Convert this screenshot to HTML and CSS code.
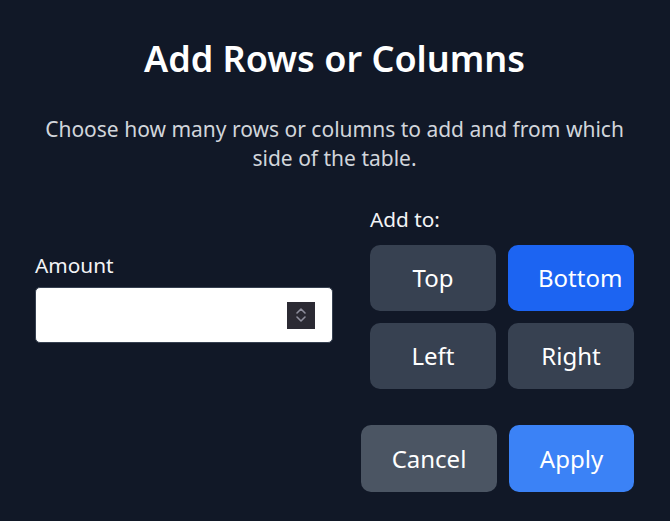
FILE: index.html
```html
<!DOCTYPE html>
<html lang="en">
<head>
<meta charset="utf-8">
<title>Add Rows or Columns</title>
<link rel="stylesheet" href="styles.css">
</head>
<body>
<div class="dialog">
  <h1 class="title">Add Rows or Columns</h1>
  <p class="subtitle">Choose how many rows or columns to add and from which side of the table.</p>
  <div class="main">
    <div class="amount">
      <label class="label">Amount</label>
      <div class="input">
        <span class="spinner">
          <svg width="12" height="20" viewBox="0 0 12 20" fill="none" stroke="#8f8f9d" stroke-width="1.6" stroke-linecap="round" stroke-linejoin="round">
            <path d="M2 8 L6 4 L10 8"/>
            <path d="M2 12 L6 16 L10 12"/>
          </svg>
        </span>
      </div>
    </div>
    <div class="sides">
      <div class="label">Add to:</div>
      <div class="side-grid">
        <button class="btn side">Top</button>
        <button class="btn side active">Bottom</button>
        <button class="btn side">Left</button>
        <button class="btn side">Right</button>
      </div>
    </div>
  </div>
  <div class="footer">
    <button class="btn cancel">Cancel</button>
    <button class="btn apply">Apply</button>
  </div>
</div>
</body>
</html>
```

FILE: styles.css
```css
html, body {
  margin: 0;
  padding: 0;
  background: #111827;
  height: 100%;
}
body {
  font-family: "Noto Sans", "Open Sans", sans-serif;
  color: #f9fafb;
}
.dialog {
  padding: 37px 36px 0 35px;
}
.title {
  margin: 0;
  font-size: 36px;
  line-height: 44px;
  font-weight: 600;
  text-align: center;
  color: #ffffff;
}
.subtitle {
  margin: 34px 0 0;
  font-size: 21px;
  line-height: 29px;
  text-align: center;
  color: #d1d5db;
}
.main {
  margin-top: 32px;
  display: flex;
  justify-content: space-between;
  align-items: center;
}
.label {
  display: block;
  font-size: 20.8px;
  line-height: 28px;
  color: #f3f4f6;
}
.amount {
  width: 298px;
  display: flex;
  flex-direction: column;
  gap: 8px;
}
.input {
  height: 56px;
  box-sizing: border-box;
  background: #ffffff;
  border: 1px solid #374151;
  border-radius: 5px;
  display: flex;
  align-items: center;
  justify-content: flex-end;
  padding-right: 17px;
}
.spinner {
  width: 28px;
  height: 27px;
  background: #2b2a33;
  display: flex;
  align-items: center;
  justify-content: center;
}
.sides {
  width: 264px;
  display: flex;
  flex-direction: column;
  gap: 12px;
}
.side-grid {
  display: grid;
  grid-template-columns: 126px 126px;
  grid-auto-rows: 66px;
  gap: 12px;
}
.btn {
  font-family: inherit;
  font-size: 24px;
  line-height: 30px;
  color: #ffffff;
  border: none;
  border-radius: 10px;
  padding: 0 30px;
  cursor: pointer;
  white-space: nowrap;
}
.side {
  background: #374151;
}
.side.active {
  background: #1c64f2;
  text-align: left;
  overflow: visible;
}
.footer {
  margin-top: 36px;
  display: flex;
  justify-content: flex-end;
  gap: 12px;
}
.footer .btn {
  height: 67px;
}
.cancel {
  width: 136px;
  background: #4b5563;
}
.apply {
  width: 125px;
  background: #3b82f6;
}
```
